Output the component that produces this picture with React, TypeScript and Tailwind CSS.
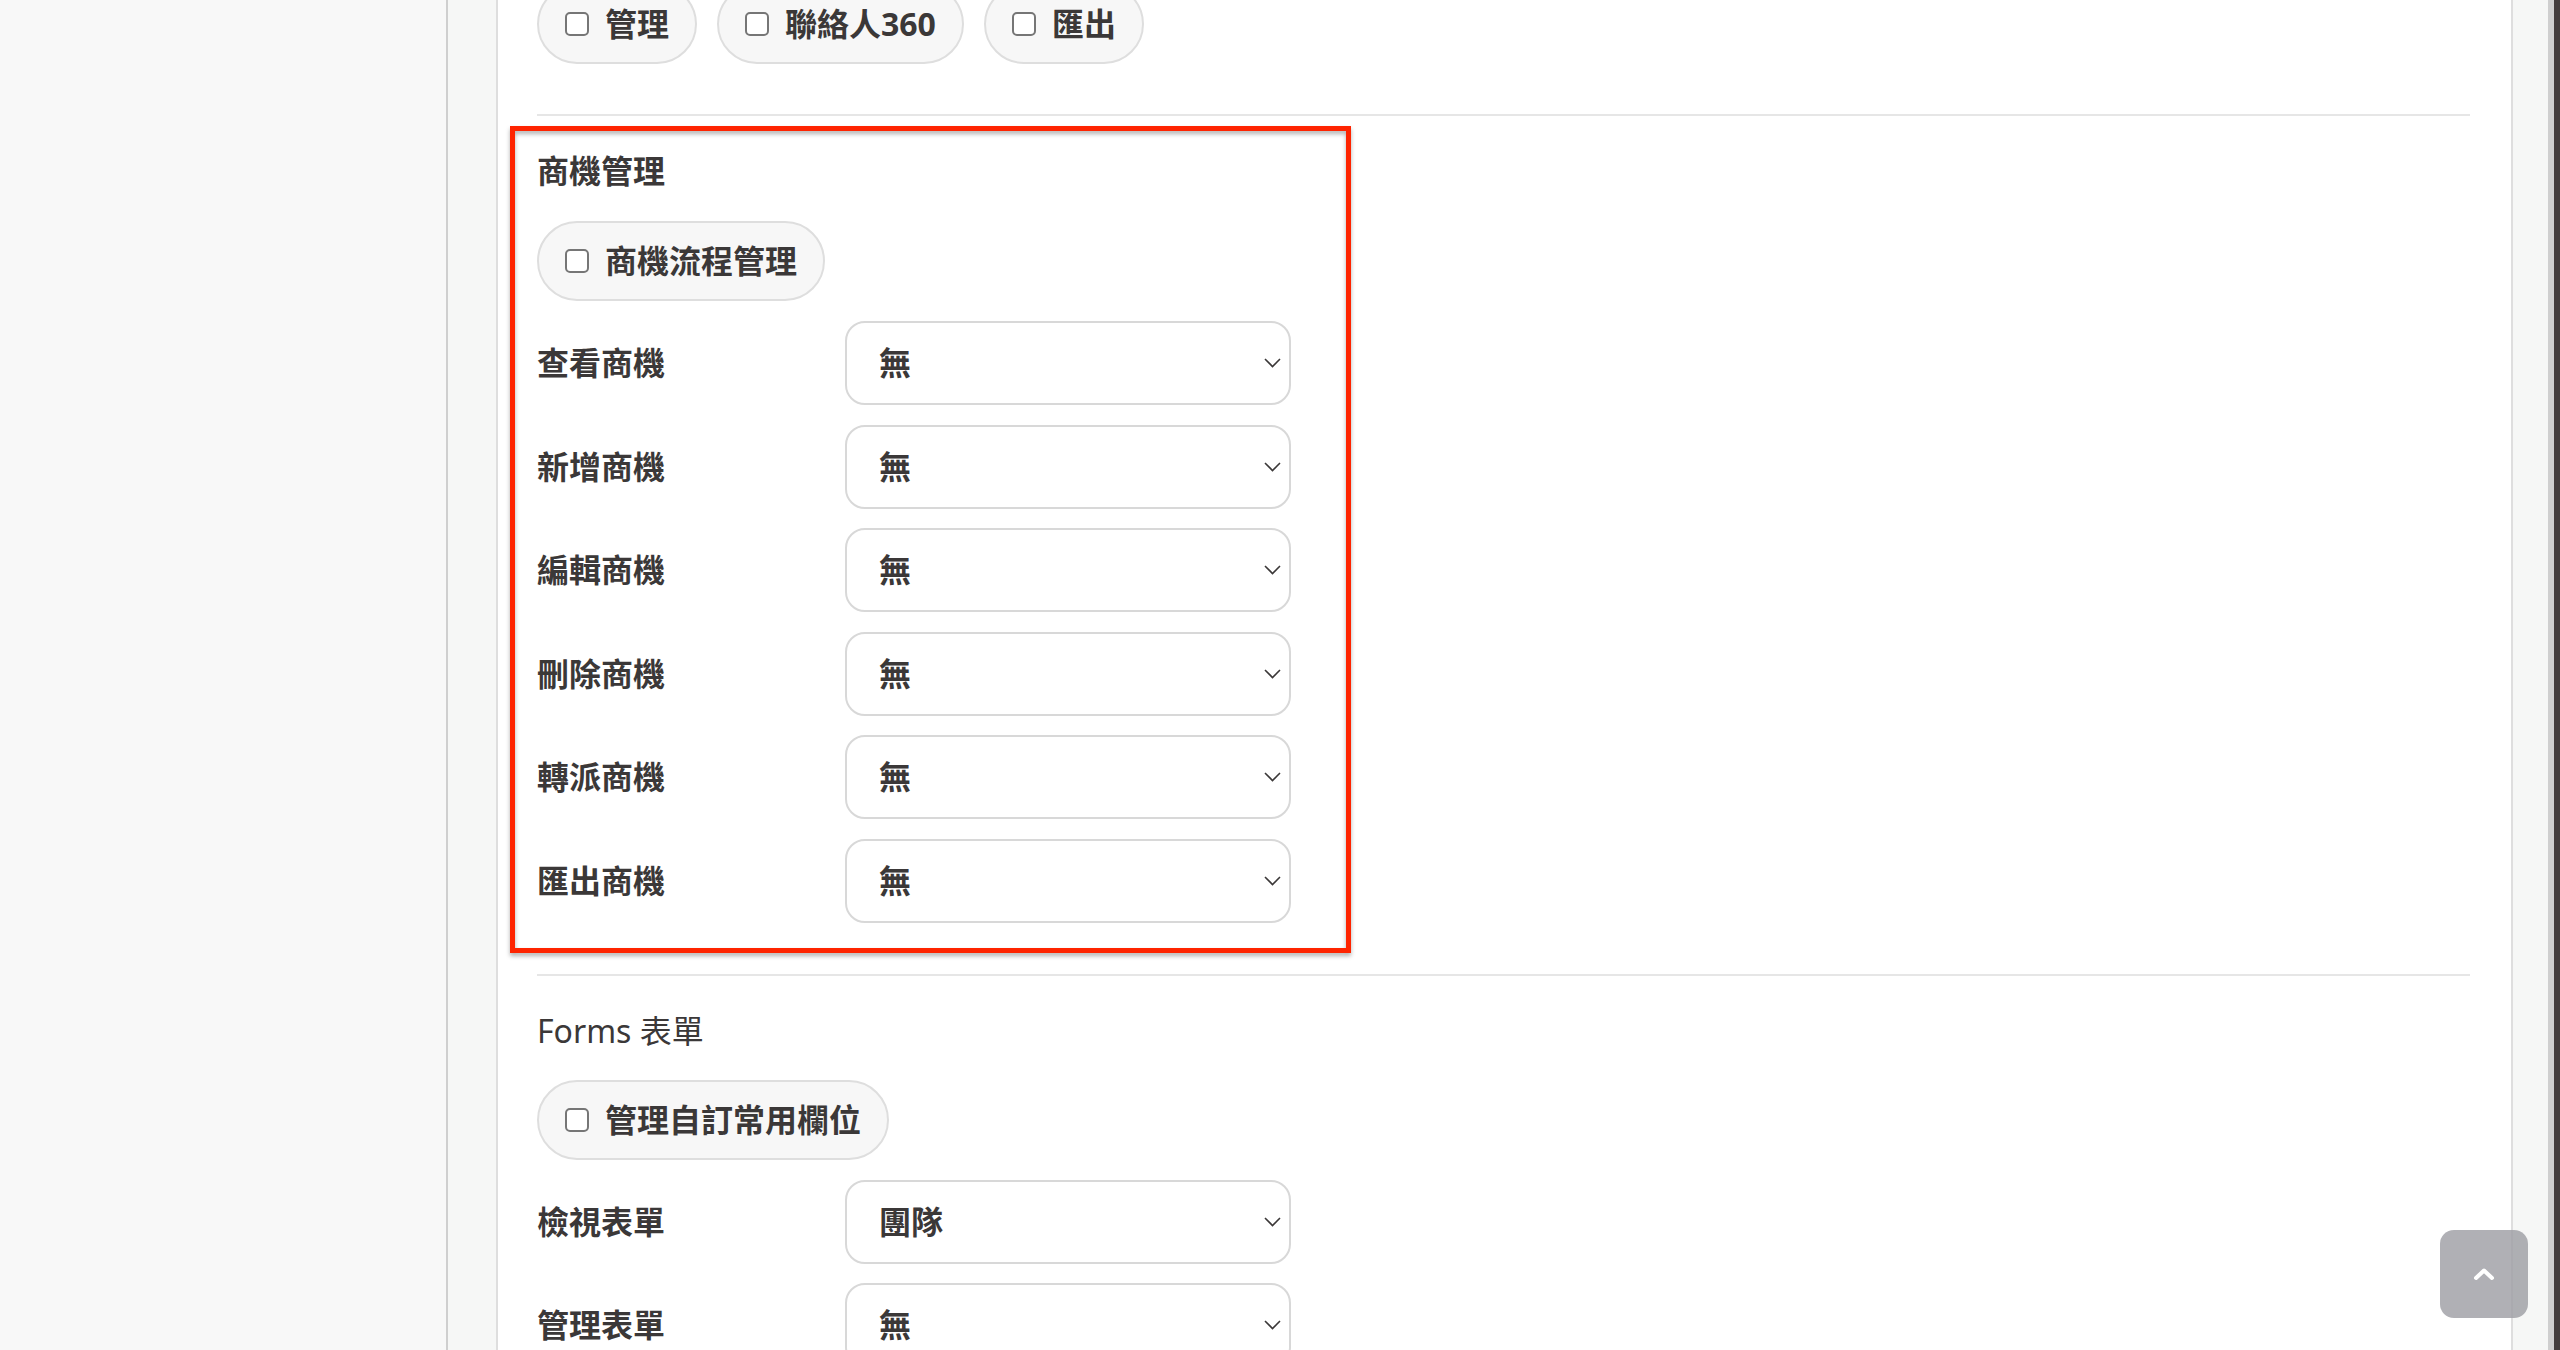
import React from 'react';

type PermRow = { label: string; value: string };

const dealRows: PermRow[] = [
  { label: '查看商機', value: '無' },
  { label: '新增商機', value: '無' },
  { label: '編輯商機', value: '無' },
  { label: '刪除商機', value: '無' },
  { label: '轉派商機', value: '無' },
  { label: '匯出商機', value: '無' },
];

const formRows: PermRow[] = [
  { label: '檢視表單', value: '團隊' },
  { label: '管理表單', value: '無' },
  { label: '刪除表單', value: '無' },
];

function CheckChip({ label }: { label: string }) {
  return (
    <label className="inline-flex h-[80px] items-center gap-4 rounded-full border-2 border-[#dedede] bg-[#f7f7f7] pl-[26px] pr-[26px]">
      <span className="block h-6 w-6 rounded-[5px] border-2 border-[#767676] bg-white" />
      <span className="text-[32px] font-bold leading-none text-[#3b3838]">{label}</span>
    </label>
  );
}

function SelectBox({ value }: { value: string }) {
  return (
    <div className="flex h-[84px] w-[446px] items-center justify-between rounded-[20px] border-2 border-[#d8d8d8] bg-white pl-8 pr-[8px]">
      <span className="text-[32px] font-bold text-[#3b3838]">{value}</span>
      <svg width="17" height="10" viewBox="0 0 17 10" fill="none">
        <polyline points="1,1 8.5,8.5 16,1" stroke="#3b3838" strokeWidth="1.6" />
      </svg>
    </div>
  );
}

function PermRows({ rows }: { rows: PermRow[] }) {
  return (
    <div className="mt-5 flex flex-col gap-[19.5px]">
      {rows.map((r) => (
        <div key={r.label} className="grid grid-cols-[308px_446px] items-center">
          <span className="text-[32px] font-bold text-[#3b3838]">{r.label}</span>
          <SelectBox value={r.value} />
        </div>
      ))}
    </div>
  );
}

export default function App() {
  return (
    <div className="relative flex h-[1350px] w-[2560px] overflow-hidden bg-[#f6f7f6] font-['Noto_Sans','Noto_Sans_CJK_TC',sans-serif]">
      {/* side nav */}
      <aside className="h-full w-[448px] shrink-0 border-r-2 border-[#cfcfcf] bg-[#f8f8f8]" />
      <div className="w-[48px] shrink-0" />

      {/* permission editor panel */}
      <main className="h-full w-[2017px] shrink-0 overflow-hidden border-x-2 border-[#dedede] bg-white pl-[39px] pr-[41px]">
        <section className="-mt-4 border-b-2 border-[#e6e6e6] pb-[50px]">
          <div className="flex gap-5">
            <CheckChip label="管理" />
            <CheckChip label="聯絡人360" />
            <CheckChip label="匯出" />
          </div>
        </section>

        <section className="relative border-b-2 border-[#e6e6e6] pb-[51px] pt-[31px]">
          <h3 className="text-[32px] font-bold leading-[48px] text-[#3b3838]">商機管理</h3>
          <div className="mt-[26px]">
            <CheckChip label="商機流程管理" />
          </div>
          <PermRows rows={dealRows} />
          <div className="pointer-events-none absolute left-[-27px] top-[10px] h-[827px] w-[841px] border-[5px] border-[#fe2400] drop-shadow-[0_3px_2px_rgba(0,0,0,0.3)]" />
        </section>

        <section className="pt-[31px]">
          <h3 className="text-[32px] font-normal leading-[48px] text-[#3b3838]">Forms 表單</h3>
          <div className="mt-[25px]">
            <CheckChip label="管理自訂常用欄位" />
          </div>
          <PermRows rows={formRows} />
        </section>
      </main>

      <div className="w-[35px] shrink-0" />
      <div className="w-[6px] shrink-0 bg-[#cfcfcf]" />
      <div className="w-[6px] shrink-0 bg-[#433d3d]" />

      {/* back to top */}
      <button className="absolute left-[2440px] top-[1230px] flex h-[88px] w-[88px] items-center justify-center rounded-[14px] bg-[#9c9ca3]/80">
        <svg width="22" height="14" viewBox="0 0 22 14" fill="none">
          <polyline points="3,11 11,3.5 19,11" stroke="white" strokeWidth="4" strokeLinecap="round" strokeLinejoin="round" />
        </svg>
      </button>
    </div>
  );
}
